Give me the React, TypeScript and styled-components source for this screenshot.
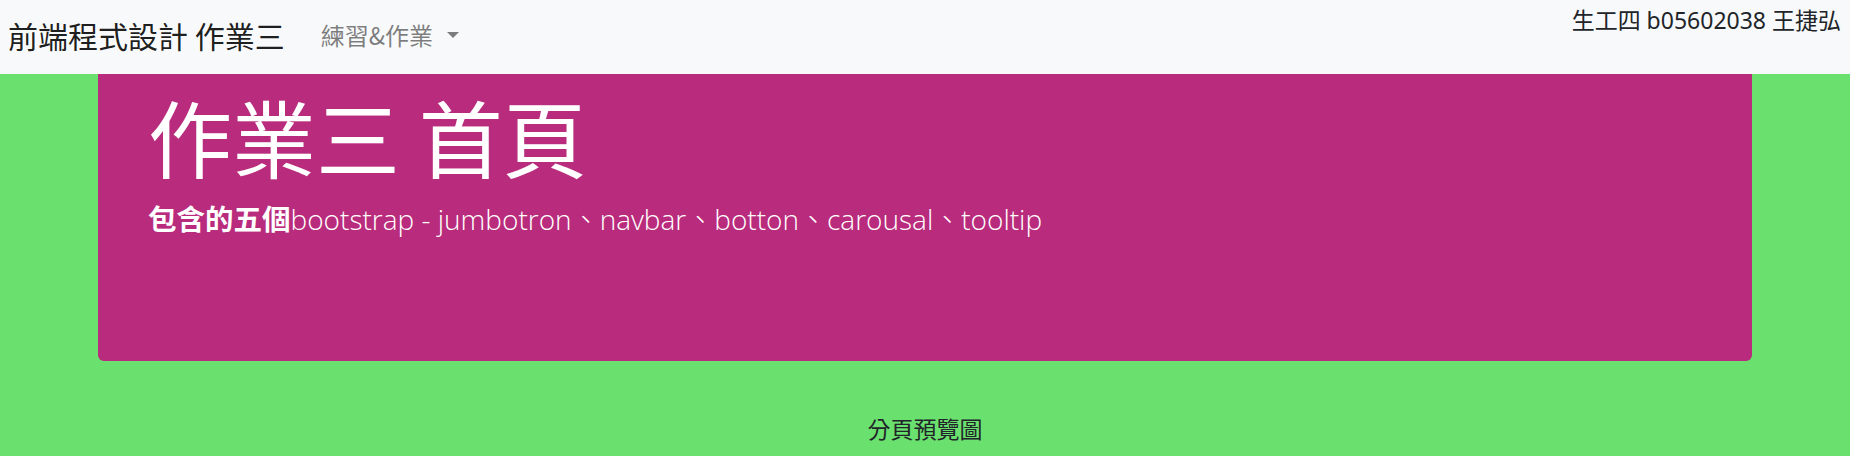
import React from "react";
import styled, { createGlobalStyle } from "styled-components";

const GlobalStyle = createGlobalStyle`
  html, body {
    margin: 0;
    padding: 0;
  }
  body {
    background: #6ae06e;
    font-family: "Open Sans", "Noto Sans CJK TC", sans-serif;
    color: #212529;
  }
`;

const Page = styled.div`
  width: 1850px;
  height: 456px;
  overflow: hidden;
  display: flex;
  flex-direction: column;
`;

const NavBar = styled.nav`
  height: 74px;
  flex: 0 0 74px;
  background: #f8f9fa;
  display: flex;
  align-items: center;
  padding: 0 9px 0 8px;
  box-sizing: border-box;
`;

const Brand = styled.a`
  font-family: "Noto Sans CJK TC", sans-serif;
  font-size: 30px;
  line-height: 1.5;
  color: rgba(0, 0, 0, 0.9);
  text-decoration: none;
  margin-right: 36px;
  margin-top: -4px;
`;

const NavLink = styled.a`
  font-family: "Noto Sans CJK TC", sans-serif;
  font-size: 24px;
  line-height: 1.5;
  color: rgba(0, 0, 0, 0.5);
  text-decoration: none;
  display: flex;
  align-items: center;
  margin-top: -4px;
`;

const Caret = styled.span`
  display: inline-block;
  margin-left: 14px;
  width: 0;
  height: 0;
  border-top: 6.5px solid rgba(0, 0, 0, 0.5);
  border-left: 6.5px solid transparent;
  border-right: 6.5px solid transparent;
`;

const UserInfo = styled.span`
  margin-left: auto;
  align-self: flex-start;
  padding-top: 3px;
  font-family: "Noto Sans", "Noto Sans CJK TC", sans-serif;
  font-size: 23px;
  line-height: 1.5;
  color: #212529;
`;

const Jumbotron = styled.section`
  margin: 0 98px;
  height: 287px;
  flex: 0 0 287px;
  background: #b92b7c;
  border-radius: 0 0 6px 6px;
  padding: 12px 50px 0;
  box-sizing: border-box;
  color: #fff;
`;

const Title = styled.h1`
  margin: 0;
  font-family: "Noto Sans CJK TC", sans-serif;
  font-weight: 400;
  font-size: 84px;
  line-height: 1.2;
`;

const Lead = styled.p`
  margin: 10px 0 0;
  font-size: 28px;
  line-height: 1.5;
  font-weight: 300;
  font-family: "Open Sans", "Noto Sans CJK TC", sans-serif;
`;

const Strong = styled.strong`
  font-family: "Noto Sans CJK TC", sans-serif;
  font-weight: 700;
  font-size: 28.5px;
`;

const Caption = styled.div`
  text-align: center;
  font-family: "Noto Sans CJK TC", sans-serif;
  font-size: 23px;
  line-height: 1.5;
  padding-top: 50px;
  color: #212529;
`;

export default function App() {
  return (
    <>
      <GlobalStyle />
      <Page>
        <NavBar>
          <Brand href="#">前端程式設計 作業三</Brand>
          <NavLink href="#">
            練習&amp;作業
            <Caret />
          </NavLink>
          <UserInfo>生工四 b05602038 王捷弘</UserInfo>
        </NavBar>
        <Jumbotron>
          <Title>作業三 首頁</Title>
          <Lead>
            <Strong>包含的五個</Strong>bootstrap - jumbotron、navbar、botton、carousal、tooltip
          </Lead>
        </Jumbotron>
        <Caption>分頁預覽圖</Caption>
      </Page>
    </>
  );
}
